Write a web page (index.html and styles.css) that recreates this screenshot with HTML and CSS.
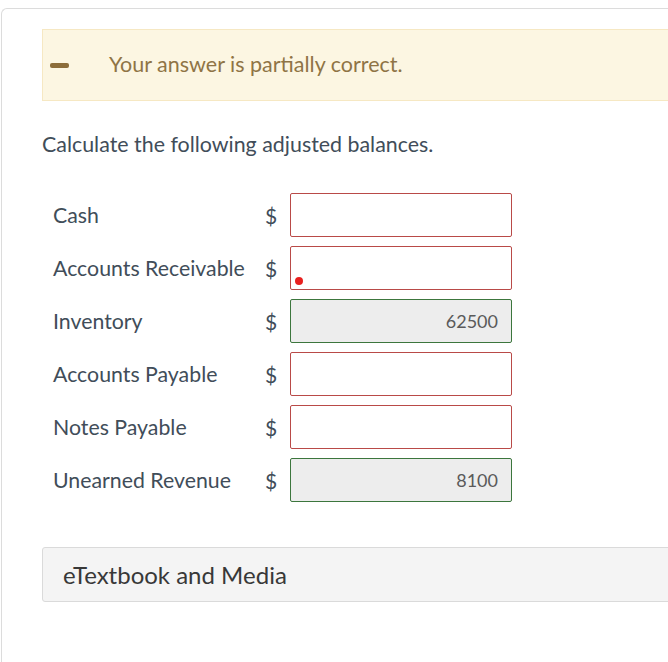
FILE: index.html
```html
<!DOCTYPE html>
<html>
<head>
<meta charset="utf-8">
<link rel="stylesheet" href="styles.css">
</head>
<body>
<div class="card">
  <div class="banner">
    <span class="dash"></span>
    <span class="banner-text">Your answer is partially correct.</span>
  </div>
  <p class="prompt">Calculate the following adjusted balances.</p>
  <div class="rows">
    <div class="row"><span class="label">Cash</span><span class="dollar">$</span><div class="field bad"></div></div>
    <div class="row"><span class="label">Accounts Receivable</span><span class="dollar">$</span><div class="field bad"><span class="dot"></span></div></div>
    <div class="row"><span class="label">Inventory</span><span class="dollar">$</span><div class="field good">62500</div></div>
    <div class="row"><span class="label">Accounts Payable</span><span class="dollar">$</span><div class="field bad"></div></div>
    <div class="row"><span class="label">Notes Payable</span><span class="dollar">$</span><div class="field bad"></div></div>
    <div class="row"><span class="label">Unearned Revenue</span><span class="dollar">$</span><div class="field good">8100</div></div>
  </div>
  <div class="media">eTextbook and Media</div>
</div>
</body>
</html>
```
FILE: styles.css
```css
html, body {
  margin: 0;
  padding: 0;
  overflow: hidden;
  background: #fff;
  font-family: Lato, "Open Sans", sans-serif;
}
.card {
  margin: 8px 0 0 1px;
  width: 720px;
  height: 700px;
  border: 1px solid #dcdcdc;
  border-right: none;
  border-radius: 6px 0 0 0;
  padding: 20px 0 0 40px;
  box-sizing: border-box;
}
.banner {
  width: 700px;
  height: 72px;
  box-sizing: border-box;
  background: #fcf6e2;
  border: 1px solid #f6e8c3;
  display: flex;
  align-items: center;
  padding-left: 7px;
}
.dash {
  width: 19px;
  height: 5px;
  border-radius: 2px;
  background: #8c6d3a;
  margin-right: 40px;
}
.banner-text {
  color: #8f7445;
  font-size: 21.5px;
  margin-top: -3px;
}
.prompt {
  margin: 29px 0 0 0;
  font-size: 21.4px;
  color: #414d59;
  line-height: 28px;
}
.rows {
  margin-top: 35px;
  padding-left: 11px;
  display: flex;
  flex-direction: column;
  gap: 9px;
}
.row {
  display: flex;
  align-items: center;
  height: 44px;
}
.label {
  width: 212px;
  font-size: 21.3px;
  color: #414d59;
}
.dollar {
  width: 25px;
  font-size: 21px;
  color: #414d59;
}
.field {
  position: relative;
  width: 222px;
  height: 44px;
  box-sizing: border-box;
  border-radius: 2px;
  font-size: 18px;
  color: #5a5a5a;
  display: flex;
  align-items: center;
  justify-content: flex-end;
  padding-right: 13px;
}
.field.bad {
  border: 1px solid #b94a48;
  background: #fff;
}
.field.good {
  border: 1px solid #3c763d;
  background: #ededed;
}
.dot {
  position: absolute;
  left: 4px;
  top: 30px;
  width: 8px;
  height: 8px;
  border-radius: 50%;
  background: #e8201f;
}
.media {
  margin-top: 45px;
  width: 700px;
  height: 55px;
  box-sizing: border-box;
  background: #f4f4f4;
  border: 1px solid #dadada;
  border-radius: 3px;
  display: flex;
  align-items: center;
  padding-left: 20px;
  font-size: 24px;
  color: #383838;
}
```
